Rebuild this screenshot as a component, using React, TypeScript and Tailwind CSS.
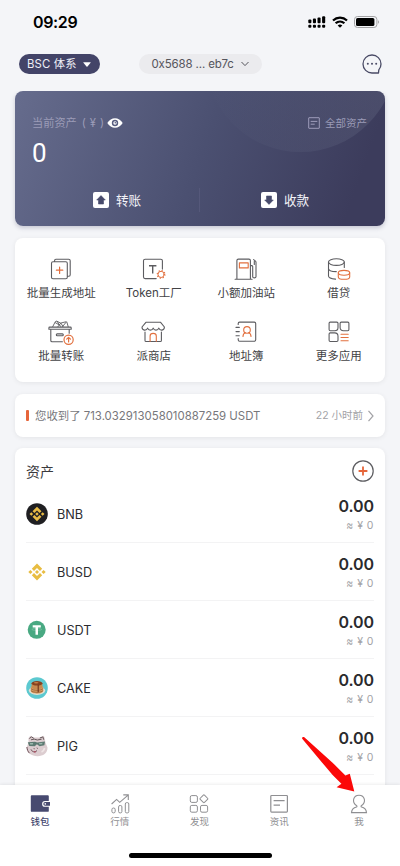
import type { ReactNode } from 'react';

const INK = '#5c5c60';
const ORANGE = '#e2703f';

/* ---------- status bar ---------- */

function SignalIcon() {
  return (
    <svg width="18" height="12" viewBox="0 0 18 12" fill="#000">
      {[0.3, 4.9, 9.5, 14.1].map((x, i) => (
        <g key={x}>
          <rect x={x} y={3.6 - i * 1.1} width="3.1" height={3.6 + i * 1.1} rx="1" />
          <rect x={x} y="8.7" width="3.1" height="3" rx="1" />
        </g>
      ))}
    </svg>
  );
}

function WifiIcon() {
  return (
    <svg width="16" height="12" viewBox="0 0 16 12" fill="none" stroke="#000" strokeWidth="2.2">
      <path d="M1 4.5C5 .7 11 .7 15 4.5" />
      <path d="M3.6 7.3c2.6-2.4 6.2-2.4 8.8 0" />
      <path d="M8 11.8 5.7 9.5c1.3-1.2 3.3-1.2 4.6 0Z" fill="#000" stroke="none" />
    </svg>
  );
}

function BatteryIcon() {
  return (
    <svg width="26" height="12" viewBox="0 0 26 12" fill="none">
      <rect x=".5" y=".5" width="22.4" height="11" rx="3" stroke="#a3a3a5" />
      <rect x="2" y="2" width="18.4" height="8" rx="1.6" fill="#000" />
      <path d="M24.2 4.2v3.6c1.2-.6 1.2-3 0-3.6Z" fill="#9b9b9d" />
    </svg>
  );
}

/* ---------- header and balance card ---------- */

function ChatIcon() {
  return (
    <svg width="20" height="20" viewBox="0 0 20 20" fill="none" stroke="#4a4b66" strokeWidth="1.3">
      <path d="M10 19A9 9 0 1 1 19 10c0 2.3-.8 4.3-2.2 5.9l-.3 3.1Z" strokeLinejoin="round" />
      <g fill="#4a4b66" stroke="none">
        <circle cx="5.8" cy="9.8" r="1" />
        <circle cx="10" cy="9.8" r="1" />
        <circle cx="14.2" cy="9.8" r="1" />
      </g>
    </svg>
  );
}

function EyeIcon() {
  return (
    <svg width="16" height="10" viewBox="0 0 16 10">
      <path d="M.3 5C4 -1.3 12 -1.3 15.7 5 12 11.3 4 11.3.3 5Z" fill="#fff" />
      <circle cx="8" cy="5" r="3.2" fill="#575d80" />
      <circle cx="8" cy="5" r="1.7" fill="#fff" />
      <circle cx="8.3" cy="4.8" r=".8" fill="#575d80" />
    </svg>
  );
}

function ListIcon() {
  return (
    <svg width="12" height="12" viewBox="0 0 12 12" fill="none" stroke="#9d9cba" strokeWidth="1">
      <rect x=".7" y=".7" width="10.6" height="10.6" rx=".3" />
      <path d="M2.7 4.4h6.6M2.7 7.2h4" />
    </svg>
  );
}

function ArrowBox({ down = false }: { down?: boolean }) {
  return (
    <svg width="16" height="16" viewBox="0 0 16 16">
      <rect width="16" height="16" rx="2" fill="#fff" />
      <path
        d="M8 3.6 12.3 8h-1.8v4h-5V8H3.7Z"
        fill="#474a6b"
        stroke="#474a6b"
        strokeWidth=".6"
        strokeLinejoin="round"
        transform={down ? 'rotate(180 8 8)' : undefined}
      />
    </svg>
  );
}

/* ---------- shortcut icons ---------- */

function ShortcutSvg({ children }: { children: ReactNode }) {
  return (
    <svg
      width="26"
      height="26"
      viewBox="0 0 26 26"
      fill="none"
      stroke={INK}
      strokeWidth="1.1"
      strokeLinecap="round"
      strokeLinejoin="round"
    >
      {children}
    </svg>
  );
}

const shortcuts: { label: string; icon: ReactNode }[] = [
  {
    label: '批量生成地址',
    icon: (
      <ShortcutSvg>
        <rect x="3.5" y="5.7" width="15.8" height="17" rx="1.5" />
        <path d="M6.6 5.5V4.6c0-.8.5-1.3 1.3-1.3h12.8c.9 0 1.5.6 1.5 1.5v14c0 .8-.5 1.4-1.3 1.4h-1.4" />
        <path d="M11.6 11v6.4M8.4 14.2h6.4" stroke={ORANGE} strokeWidth="1.2" />
      </ShortcutSvg>
    ),
  },
  {
    label: 'Token工厂',
    icon: (
      <ShortcutSvg>
        <path d="M15.2 22.6H4.1c-.9 0-1.6-.6-1.6-1.5V4.8c0-.9.7-1.5 1.6-1.5h15.7c.9 0 1.6.6 1.6 1.5v8.3" />
        <path d="M8 9.8h7.4M11.7 9.8v7.6" strokeWidth="1.4" strokeLinecap="butt" />
        <g stroke={ORANGE}>
          <circle cx="20.1" cy="18.4" r="3.1" strokeWidth="1" />
          <circle cx="20.1" cy="18.4" r="3.9" strokeWidth="1.1" strokeDasharray="1.3 1.76" strokeLinecap="butt" />
        </g>
      </ShortcutSvg>
    ),
  },
  {
    label: '小额加油站',
    icon: (
      <ShortcutSvg>
        <path d="M2.1 23.2h17M3.9 23V4.6c0-1 .6-1.5 1.5-1.5h10.5c1 0 1.5.6 1.5 1.5V23" />
        <rect x="6.4" y="6.9" width="8.8" height="5" stroke={ORANGE} />
        <path d="M17.5 9.6h1.3c.6 0 .9.4.9 1v10.2c0 1.4 3.3 1.4 3.3 0V6.2c0-.5-.2-.8-.5-1.1l-1.9-1.5M21.3 8.4v-3" />
      </ShortcutSvg>
    ),
  },
  {
    label: '借贷',
    icon: (
      <ShortcutSvg>
        <ellipse cx="10.4" cy="6.1" rx="7.9" ry="3.3" />
        <path d="M2.5 6.1v14c0 1.4 2.5 2.7 7 3M18.3 6.1v5.4M2.5 12.4c0 1.9 3.4 3.1 7.8 3.2" />
        <g stroke={ORANGE}>
          <ellipse cx="18" cy="16.8" rx="5.7" ry="2.4" />
          <path d="M12.3 16.8v4.1c0 3.2 11.4 3.2 11.4 0v-4.1" />
        </g>
      </ShortcutSvg>
    ),
  },
  {
    label: '批量转账',
    icon: (
      <ShortcutSvg>
        <path d="M.9 8.9c0-.5.3-.8.8-.8h20.7c.5 0 .8.3.8.8v1.4H.9Z" />
        <path d="M2.8 10.5v11c0 .8.5 1.3 1.3 1.3h10.3M21.2 10.5v3.8M9.2 14.9h5.2c1.2 0 1.2 1.9 0 1.9H9.2c-1.2 0-1.2-1.9 0-1.9Z" />
        <path d="m4.7 7.7 2.6-5c.3-.6 1-.8 1.6-.5l3.9 2-3 3.6M7.4 3.7l4 2.3M9.2 2.6l3.5 4.9M13 4l4.8-1.2c.5-.1 1 .2 1.2.7l1.2 4.2M14.6 7.5 18.3 3M13 4.4l2 3" strokeWidth=".9" />
        <circle cx="20.6" cy="20.7" r="4.6" stroke={ORANGE} strokeWidth="1.2" fill="#fff" />
        <path d="M20.6 23v-4.6M18.7 20.2l1.9-1.9 1.9 1.9" stroke={ORANGE} strokeWidth="1.2" />
      </ShortcutSvg>
    ),
  },
  {
    label: '派商店',
    icon: (
      <ShortcutSvg>
        <path d="M4.9 3.3h14.7L23.4 8c0 4-4.5 4-5.6 1.1-.9 2.7-4.7 2.7-5.6 0-.9 2.7-4.7 2.7-5.6 0C5.5 12 1 12 1 8Z" />
        <path d="M4 13v8.4c0 .7.4 1.1 1.1 1.1h14.2c.7 0 1.1-.4 1.1-1.1V13" />
        <path d="M9.1 22.3v-5.2c0-3.6 6.2-3.6 6.2 0v5.2" stroke={ORANGE} />
      </ShortcutSvg>
    ),
  },
  {
    label: '地址簿',
    icon: (
      <ShortcutSvg>
        <path d="M5.2 5.4v-.9c0-.9.6-1.4 1.4-1.4h14.6c.9 0 1.5.6 1.5 1.4v16.3c0 .9-.6 1.5-1.5 1.5H6.6c-.8 0-1.4-.6-1.4-1.5v-1.2" />
        <path d="M3 8.4h3.3M3 12.6h3.3M3 16.8h3.3" />
        <g stroke={ORANGE}>
          <circle cx="14" cy="10.9" r="3.3" />
          <path d="M10 17.5c0-2 1.2-3.3 2.5-3.7M18 17.5c0-2-1.2-3.3-2.5-3.7" />
        </g>
      </ShortcutSvg>
    ),
  },
  {
    label: '更多应用',
    icon: (
      <ShortcutSvg>
        <path d="M4.2 3.1h6.6c.7 0 1.2.5 1.2 1.2v4.2c0 2-1.3 3.3-3.3 3.3H4.3c-.7 0-1.2-.5-1.2-1.2V4.3c0-.7.4-1.2 1.1-1.2Z" />
        <path d="M15.3 3.1h6.5c.7 0 1.1.5 1.1 1.2v6.3c0 .7-.5 1.2-1.2 1.2h-4.3c-2 0-3.3-1.3-3.3-3.3V4.3c0-.7.5-1.2 1.2-1.2Z" />
        <path d="M4.2 13.9h4.5c2 0 3.3 1.3 3.3 3.3v4.1c0 .7-.5 1.2-1.2 1.2H4.2c-.7 0-1.1-.5-1.1-1.2v-6.2c0-.7.4-1.2 1.1-1.2Z" />
        <path d="M15 15.3h7.2M15 18.5h7.2M15 21.7h7.2" stroke={ORANGE} />
      </ShortcutSvg>
    ),
  },
];

/* ---------- coins ---------- */

// Binance diamond, shared by BNB and BUSD
function Diamond({ color, scale }: { color: string; scale: number }) {
  return (
    <g fill={color} transform={`translate(11 11) scale(${scale})`}>
      <path d="M0-8.5 5.2-3.3 3-1.1 0-4.1-3-1.1-5.2-3.3Z" />
      <path d="M0 8.5-5.2 3.3-3 1.1 0 4.1 3 1.1 5.2 3.3Z" />
      <path d="M0-2 2 0 0 2-2 0ZM-6.6-2.1-4.5 0-6.6 2.1-8.7 0ZM6.6-2.1 8.7 0 6.6 2.1 4.5 0Z" />
    </g>
  );
}

function CoinSvg({ children }: { children: ReactNode }) {
  return (
    <svg width="22" height="22" viewBox="0 0 22 22">
      {children}
    </svg>
  );
}

const coins: { name: string; icon: ReactNode }[] = [
  {
    name: 'BNB',
    icon: (
      <CoinSvg>
        <circle cx="11" cy="11" r="10.8" fill="#1f1f22" />
        <Diamond color="#e9bc45" scale={0.86} />
      </CoinSvg>
    ),
  },
  {
    name: 'BUSD',
    icon: (
      <CoinSvg>
        <Diamond color="#e8bd42" scale={1} />
      </CoinSvg>
    ),
  },
  {
    name: 'USDT',
    icon: (
      <CoinSvg>
        <circle cx="10.7" cy="10.8" r="9" fill="#49a982" />
        <ellipse cx="10.7" cy="10.4" rx="4.9" ry="1" fill="none" stroke="#8ccab1" strokeWidth=".5" />
        <path d="M6.7 6.2h8.1v2.2h-2.8v7.3H9.5V8.4H6.7Z" fill="#fff" />
      </CoinSvg>
    ),
  },
  {
    name: 'CAKE',
    icon: (
      <CoinSvg>
        <circle cx="11" cy="11" r="10.8" fill="#5cc9d0" />
        <ellipse cx="11" cy="13.5" rx="8.2" ry="4.4" fill="#e3e0d2" />
        <path d="M4.8 9.6h12.4v4.2c0 3.8-12.4 3.8-12.4 0Z" fill="#d39c62" />
        <path d="M4.8 11.6c2.8 2.3 9.6 2.3 12.4 0M4.8 13.6c2.8 2.3 9.6 2.3 12.4 0" fill="none" stroke="#94562c" strokeWidth=".7" />
        <path d="M5.6 6.2h10.8v4.2c0 2.4-10.8 2.4-10.8 0Z" fill="#c78a4f" />
        <ellipse cx="11" cy="6.3" rx="5.4" ry="2.3" fill="#87421f" />
        <ellipse cx="10.2" cy="5.7" rx="2.3" ry=".8" fill="#c68349" />
        <path d="M12.2 7.8v7.4" stroke="#6b3019" strokeWidth="1.1" />
      </CoinSvg>
    ),
  },
  {
    name: 'PIG',
    icon: (
      <CoinSvg>
        <path d="M2.4 3.2 4.4.8 8 2.5h5.6l4.3-1.7 1 3.5.6 3.5 2 4.8c.2 5.5-4.6 8.8-10 8.7C5.5 21.2.6 18 .7 12.6L2.6 7.2Z" fill="#dccdd0" />
        <path d="m3.3 3.5 2.3-1.6 2.2 1.5M13.8 3l3.1-1.1.8 2.8M5 4.8l3.2-.7 3.1.9 4.3-.8" fill="none" stroke="#67595c" strokeWidth="1" />
        <path d="M1.8 7.2 9 6.7l2.2.7 7.8-.9-.6 3.7-4.8 1-2.7-2-2.1 2-5.6-.2Z" fill="#5d7a72" />
        <path d="m4 8.1 3.2-.1-.4 1.6-2.7-.1ZM12.8 8.2l3.8-.4-.5 1.5-2.6.3Z" fill="#9cb9ae" />
        <path d="M.9 12c.2 2.5 1 4.6 2.6 6.2M5 14.4c1.2 2.6 3.5 3.3 6 1.2M8 13.2l.3 1M11 12.7l.5 1" fill="none" stroke="#6c4d55" strokeWidth="1" />
        <path d="m7.3 16.3 2.7-.3-.8 2.2Z" fill="#ad5367" />
        <path d="M15.5 17c1.8-.8 2.8-2.2 3.1-4" fill="none" stroke="#efe6e6" strokeWidth="1.6" />
      </CoinSvg>
    ),
  },
];

/* ---------- tab bar ---------- */

function TabSvg({ children }: { children: ReactNode }) {
  return (
    <svg width="20" height="20" viewBox="0 0 20 20" fill="none" stroke="#8f8f92" strokeWidth="1">
      {children}
    </svg>
  );
}

const tabs: { label: string; active?: boolean; icon: ReactNode }[] = [
  {
    label: '钱包',
    active: true,
    icon: (
      <TabSvg>
        <path d="M2.4 1.3h15.5c.5 0 .9.4.9.9V7H15a2.9 2.9 0 0 0 0 5.8h3.8v4.1c0 .5-.4.9-.9.9H1.7c-.5 0-.9-.4-.9-.9V2.2c0-.5.4-.9.9-.9Z" fill="#474a70" stroke="none" />
        <path d="M20 8.1h-4.9a1.8 1.8 0 0 0 0 3.6H20Z" fill="#474a70" stroke="none" />
        <circle cx="15.3" cy="9.9" r=".8" fill="#fff" stroke="none" />
      </TabSvg>
    ),
  },
  {
    label: '行情',
    icon: (
      <TabSvg>
        <path d="m1.6 10 5-4.6 3.1 2.9 8.4-7.1M13.3.9h5v5" strokeWidth="1.1" />
        <rect x="1.9" y="14" width="3.3" height="4.9" rx="1.6" />
        <rect x="8.6" y="11.5" width="3.3" height="7.4" rx="1.4" />
        <rect x="15.3" y="8.6" width="3.5" height="10.3" rx="1.4" />
      </TabSvg>
    ),
  },
  {
    label: '发现',
    icon: (
      <TabSvg>
        <rect x="1.3" y="1.6" width="7.1" height="6.8" rx="1.5" />
        <rect x="1.3" y="11.4" width="7.1" height="6.8" rx="1.5" />
        <rect x="11.5" y="11.4" width="7.1" height="6.8" rx="1.5" />
        <rect x="11.9" y="1.8" width="6" height="6" rx=".8" transform="rotate(45 14.9 4.8)" />
      </TabSvg>
    ),
  },
  {
    label: '资讯',
    icon: (
      <TabSvg>
        <rect x="1.8" y="1.5" width="16.6" height="16.6" rx=".8" strokeWidth="1.2" />
        <path d="M4.6 6.6h11M4.6 11.2h6.4" strokeWidth="1.2" />
      </TabSvg>
    ),
  },
  {
    label: '我',
    icon: (
      <TabSvg>
        <path d="M7.7 11.8C2.3 8.2 4.3 1.2 10 1.2s7.7 7 2.3 10.6c-.5.3-.3 1.1.2 1.2 2.5.5 4.7 2 5 5.6H2.5c.3-3.6 2.5-5.1 5-5.6.5-.1.7-.9.2-1.2Z" strokeWidth="1.1" />
      </TabSvg>
    ),
  },
];

export default function App() {
  return (
    <div className="relative flex h-[866px] w-full flex-col overflow-hidden bg-[#f4f5f8] font-['Inter','Noto_Sans_CJK_SC',sans-serif] whitespace-nowrap text-[#2c2c30]">
      {/* Status bar */}
      <div className="flex h-11 shrink-0 items-center justify-between pr-5 pl-[33px]">
        <span className="text-[16px] leading-5 font-semibold tracking-[-0.35px] text-black">09:29</span>
        <div className="flex items-center gap-[6px]">
          <SignalIcon />
          <WifiIcon />
          <BatteryIcon />
        </div>
      </div>

      {/* Chain and address */}
      <div className="flex h-[47px] shrink-0 items-start justify-between pt-[10px] pr-[18px] pl-[19px]">
        <div className="flex h-5 w-[81px] items-center justify-between rounded-full bg-[#434468] pr-[9px] pl-2 text-[11.3px] leading-5 text-[#f0f0f7]">
          <span className="tracking-[0.2px]">BSC 体系</span>
          <svg width="8" height="5" viewBox="0 0 8 5" fill="#fff">
            <path d="M.7.2h6.6c.4 0 .5.3.3.6L4.5 4.4c-.3.3-.7.3-1 0L.4.8C.2.5.3.2.7.2Z" />
          </svg>
        </div>
        <div className="mr-[62px] flex h-5 w-[123px] items-center justify-between rounded-full bg-[#ebebee] pr-[13px] pl-[13px] text-[11.5px] leading-5 text-[#55555c]">
          <span className="tracking-[-0.15px]">0x5688 ... eb7c</span>
          <svg width="8" height="6" viewBox="0 0 8 6" fill="none" stroke="#55555c">
            <path d="m.5 1 3.5 3.6L7.5 1" />
          </svg>
        </div>
        <ChatIcon />
      </div>

      <div className="flex min-h-0 flex-1 flex-col overflow-hidden px-[15px]">
        {/* Balance card */}
        <div className="relative h-[135px] shrink-0 overflow-hidden rounded-lg bg-linear-110 from-[#666c8d] via-[#4b5071] via-50% to-[#3c3c5c] to-90% shadow-[0_2px_4px_rgba(67,68,104,0.25)]">
          {/* Soft highlight in the corner */}
          <div className="absolute -top-[130px] left-[190px] size-[191px] rounded-full bg-linear-to-r from-transparent to-[#8790a5]/20" />
          <div className="relative flex h-full flex-col">
            <div className="mt-[23px] flex h-[18px] items-center justify-between pr-[18px] pl-[17px] text-[#9b9bb7]">
              <div className="flex items-center text-[11.2px]">
                <span>当前资产</span>
                <span className="ml-[5px] w-[25px] tracking-[0.4px]">( ¥ )</span>
                <EyeIcon />
              </div>
              <div className="flex items-center gap-[5px] text-[10.5px]">
                <ListIcon />
                <span className="pt-px">全部资产</span>
              </div>
            </div>
            <div className="mt-[5px] h-8 pl-[17px] font-['Roboto',sans-serif] text-[26px] leading-8 text-white">0</div>
            <div className="mt-[19px] flex h-6 items-center text-[12.6px] text-[#f3f3f8]">
              <div className="flex w-[184px] items-center gap-[7px] pl-[78px]">
                <ArrowBox />
                <span className="pt-[2px]">转账</span>
              </div>
              <div className="h-6 w-px bg-[#55587a]" />
              <div className="flex items-center gap-[7px] pl-[61px]">
                <ArrowBox down />
                <span className="pt-[2px]">收款</span>
              </div>
            </div>
          </div>
        </div>

        {/* Shortcuts */}
        <div className="mt-3 grid h-36 shrink-0 grid-cols-4 content-start gap-y-[16px] rounded-lg bg-white pt-[18px] shadow-[0_1px_5px_rgba(0,0,0,0.07)]">
          {shortcuts.map((s) => (
            <div key={s.label} className="flex h-[47px] flex-col items-center text-[11.5px] leading-[18px] text-[#424245]">
              {s.icon}
              <span className="mt-[2px]">{s.label}</span>
            </div>
          ))}
        </div>

        {/* Latest notice */}
        <div className="mt-3 flex h-[43px] shrink-0 items-center rounded-lg bg-white pr-[10px] pl-[11px] shadow-[0_1px_5px_rgba(0,0,0,0.07)]">
          <div className="h-[11px] w-[3px] rounded-[1px] bg-[#e6653a]" />
          <span className="ml-[6px] pt-[2px] text-[11.4px] text-[#77777b]">您收到了 713.032913058010887259 USDT</span>
          <span className="ml-auto pt-px text-[10.5px] text-[#a2a2a6]">22 小时前</span>
          <svg className="ml-1" width="8" height="12" viewBox="0 0 8 12" fill="none" stroke="#a2a2a6" strokeWidth="1.2">
            <path d="m1.5.8 4.5 5.2-4.5 5.2" />
          </svg>
        </div>

        {/* Assets */}
        <div className="mt-[11px] h-[400px] shrink-0 rounded-t-lg bg-white px-[11px] shadow-[0_1px_5px_rgba(0,0,0,0.07)]">
          <div className="flex h-[37px] items-start justify-between pt-3">
            <span className="text-[14px] leading-6 text-[#3a3a3d]">资产</span>
            <svg width="22" height="22" viewBox="0 0 22 22" fill="none">
              <circle cx="11" cy="11" r="10.2" stroke="#5c5c60" strokeWidth="1.2" />
              <path d="M11 6.6v8.8M6.6 11h8.8" stroke="#e6653a" strokeWidth="1.8" />
            </svg>
          </div>
          {coins.map((c) => (
            <div key={c.name} className="flex h-[58px] items-center border-b border-[#f3f3f4] pt-px">
              {c.icon}
              <span className="ml-[9px] pt-px text-[12.7px]">{c.name}</span>
              <div className="ml-auto flex flex-col items-end pt-px">
                <span className="text-[16px] leading-5 font-semibold tracking-[-0.1px] text-[#2a2a2d]">0.00</span>
                <span className="mt-[2px] text-[10.5px] leading-4 tracking-[0.5px] text-[#a2a2a6]">≈ ¥ 0</span>
              </div>
            </div>
          ))}
        </div>
      </div>

      {/* Tab bar */}
      <div className="z-10 flex h-[81px] shrink-0 flex-col items-center justify-between bg-white pb-2 shadow-[0_-1px_3px_rgba(0,0,0,0.07)]">
        <div className="grid w-full grid-cols-5 pt-[9px] pr-px">
          {tabs.map((t) => (
            <div
              key={t.label}
              className={
                t.active
                  ? 'flex flex-col items-center text-[9.5px] leading-[14px] font-medium text-[#474a70]'
                  : 'flex flex-col items-center text-[9.5px] leading-[14px] text-[#8f8f92]'
              }
            >
              {t.icon}
              <span className="mt-px">{t.label}</span>
            </div>
          ))}
        </div>
        <div className="h-[5px] w-[143px] rounded-full bg-black" />
      </div>

      {/* Pointer to the profile tab */}
      <svg className="absolute top-[735px] left-[300px] z-20" width="58" height="60" viewBox="0 0 58 60" fill="#fb0808">
        <path d="M2.2 3.8C1.7 2.4 3.2 1.4 4.6 2.4L34.4 29.4 45.4 40.6 49.8 38.8 54.3 56.4 36.6 52.2 41.4 48.8 32.6 40 24.6 30.6Z" />
      </svg>
    </div>
  );
}
